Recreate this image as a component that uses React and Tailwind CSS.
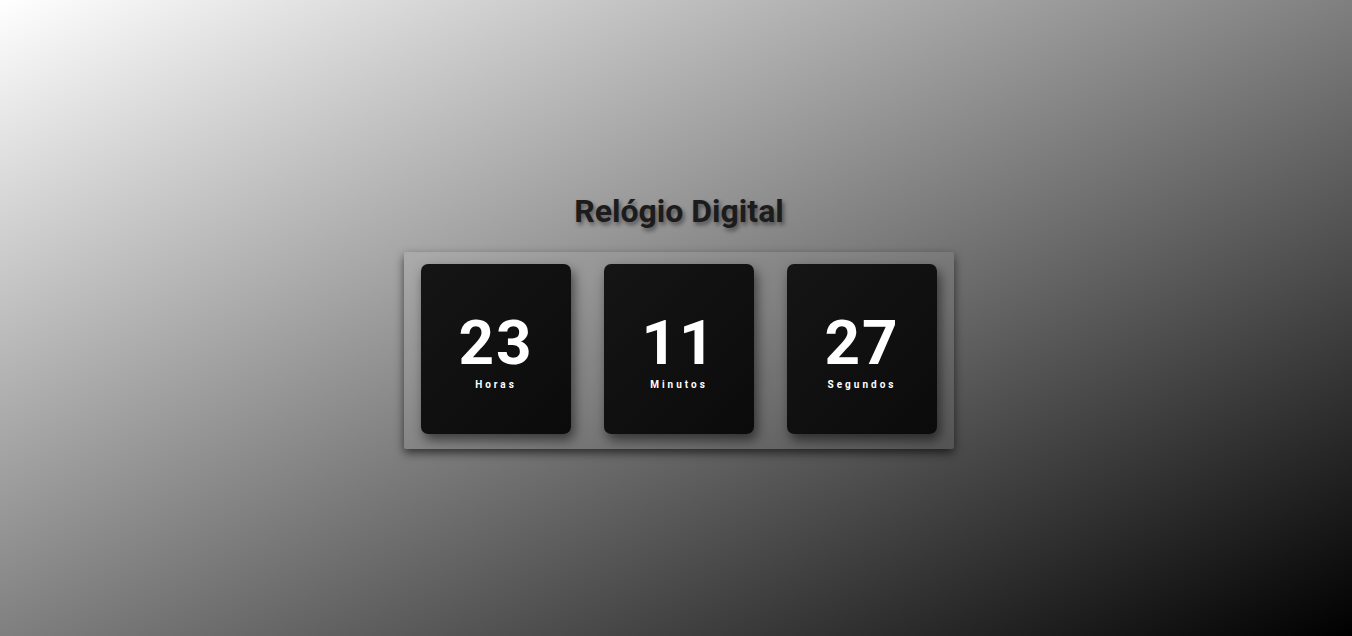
export default function App() {
  const items = [
    ["23", "Horas"],
    ["11", "Minutos"],
    ["27", "Segundos"],
  ];
  return (
    <div className="h-screen w-full flex flex-col items-center justify-center pl-[6px] pt-[5px] bg-[linear-gradient(to_bottom_right,#ffffff,#000000)] font-['Roboto',sans-serif]">
      <h1 className="text-[32px] leading-[38px] font-bold text-[#1c1c1c] [text-shadow:2px_3px_4px_rgba(0,0,0,0.45)] mb-[22px]">
        Relógio Digital
      </h1>
      <div className="flex gap-[33px] pl-[17px] pr-[17px] pt-[12px] pb-[15px] bg-white/5 rounded-[2px] shadow-[0_4px_10px_rgba(0,0,0,0.6)]">
        {items.map(([n, l]) => (
          <div
            key={l}
            className="w-[150px] h-[170px] rounded-[7px] bg-[linear-gradient(135deg,#151515,#0b0b0b)] shadow-[3px_6px_12px_rgba(0,0,0,0.55)] flex flex-col items-center justify-center"
          >
            <div className="text-[62px] leading-[62px] font-bold text-white tracking-[2px] mt-[5px]">{n}</div>
            <div className="text-[10px] leading-[12px] font-bold text-white tracking-[3px] mt-[5px]">{l}</div>
          </div>
        ))}
      </div>
    </div>
  );
}
